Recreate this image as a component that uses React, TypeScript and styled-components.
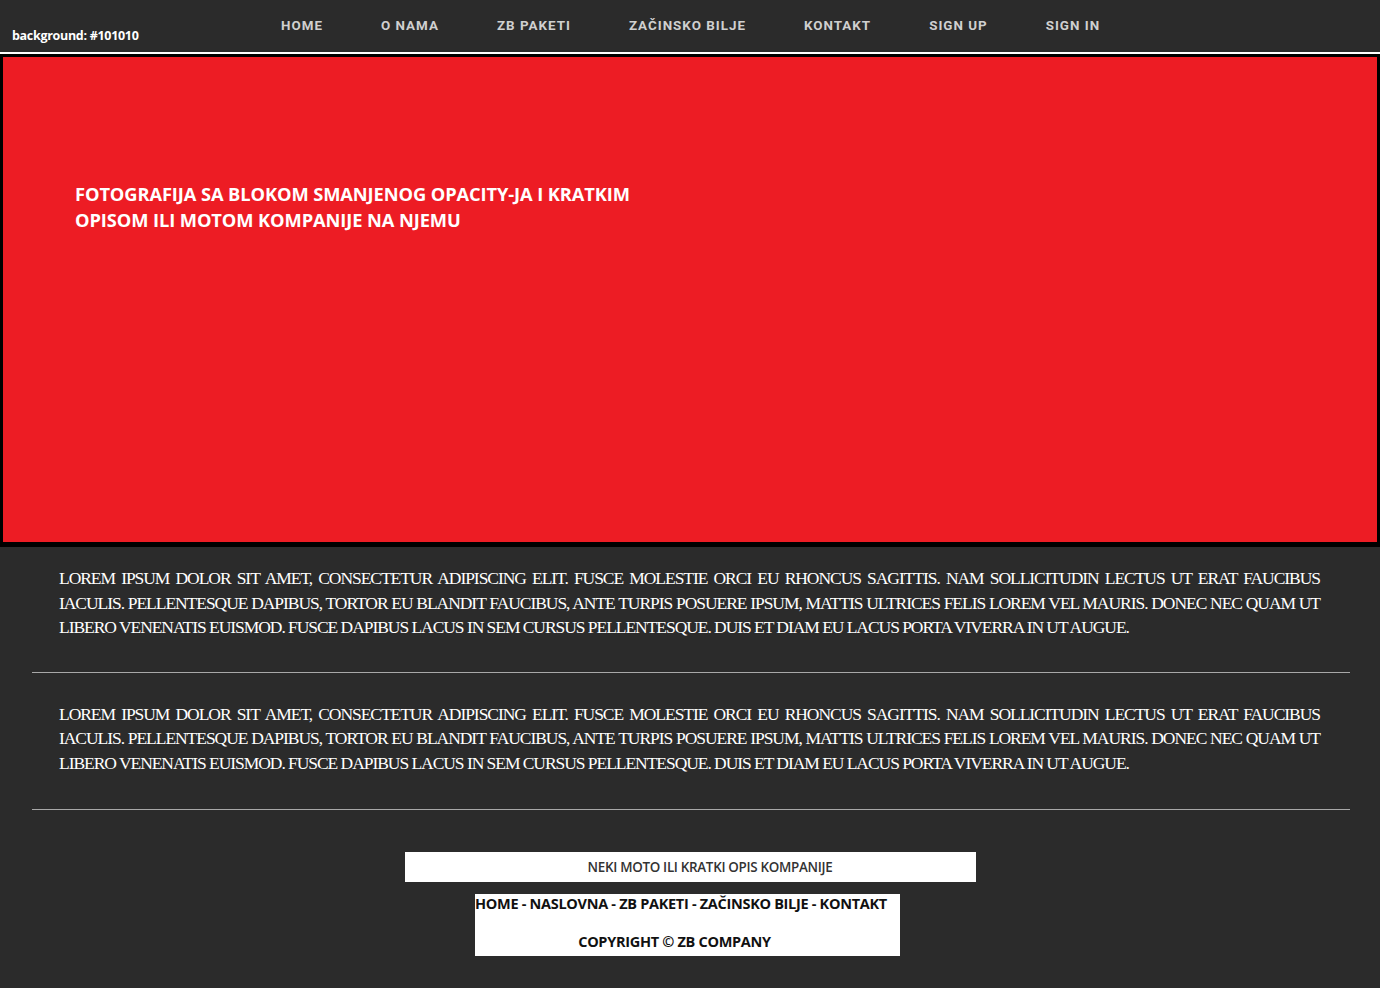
import React from "react";
import styled, { createGlobalStyle } from "styled-components";

const Global = createGlobalStyle`
  html, body { margin: 0; padding: 0; background: #2b2b2b; }
  * { box-sizing: border-box; }
`;

const Page = styled.div`
  width: 1380px;
  min-height: 988px;
  background: #2b2b2b;
  display: flex;
  flex-direction: column;
`;

const Header = styled.header`
  height: 52px;
  display: flex;
  background: #2b2b2b;
  border-bottom: 2px solid #ffffff;
  box-sizing: content-box;
`;

const Label = styled.div`
  width: 281px;
  padding-left: 12px;
  align-self: flex-end;
  padding-bottom: 8px;
  font-family: "Open Sans", "Noto Sans", sans-serif;
  font-weight: 700;
  font-size: 12.5px;
  color: #ffffff;
  letter-spacing: -0.3px;
`;

const Nav = styled.nav`
  display: flex;
  gap: 58px;
  padding-top: 17px;
`;

const NavLink = styled.a`
  font-family: Roboto, "Liberation Sans", sans-serif;
  font-weight: 700;
  font-size: 13.4px;
  letter-spacing: 1px;
  color: #d0d0d0;
  text-decoration: none;
  line-height: 17px;
`;

const HeroFrame = styled.section`
  background: #000000;
  padding: 3px 3px 5px 3px;
  height: 493px;
`;

const Hero = styled.div`
  background: #ed1c24;
  height: 100%;
  padding: 124px 0 0 72px;
`;

const HeroText = styled.h1`
  margin: 0;
  width: 580px;
  font-family: "Open Sans", "Noto Sans", sans-serif;
  font-weight: 700;
  font-size: 18.3px;
  line-height: 26px;
  color: #ffffff;
  letter-spacing: -0.1px;
`;

const Content = styled.main`
  padding-top: 19px;
`;

const Para = styled.p`
  margin: 0;
  padding: 0 60px 0 59px;
  font-family: "Liberation Serif", "Times New Roman", serif;
  font-size: 17.5px;
  line-height: 24.5px;
  color: #ffffff;
  text-align: justify;
  text-transform: uppercase;
  letter-spacing: -1.05px;
`;

const Rule = styled.hr<{ $top: number }>`
  margin: ${(p) => p.$top}px 30px 29px 32px;
  border: 0;
  border-top: 1px solid #a8a8a8;
  height: 0;
`;

const Footer = styled.footer`
  display: flex;
  flex-direction: column;
  align-items: center;
  gap: 12px;
  padding-top: 13px;
`;

const Motto = styled.div`
  width: 571px;
  height: 30px;
  background: #ffffff;
  display: flex;
  align-items: center;
  justify-content: center;
  padding-left: 40px;
  font-family: "Open Sans", "Noto Sans", sans-serif;
  font-weight: 600;
  font-size: 13.4px;
  color: #333333;
  letter-spacing: -0.3px;
`;

const Links = styled.div`
  width: 425px;
  height: 62px;
  margin-left: -5px;
  background: #ffffff;
  font-family: "Open Sans", "Noto Sans", sans-serif;
  font-weight: 700;
  font-size: 14.5px;
  color: #111111;
  letter-spacing: -0.3px;
  display: flex;
  flex-direction: column;
`;

const LinksRow = styled.div`
  line-height: 19px;
`;

const Copy = styled.div`
  margin-top: 19px;
  line-height: 19px;
  text-align: center;
  padding-right: 26px;
`;

const lorem =
  "Lorem ipsum dolor sit amet, consectetur adipiscing elit. Fusce molestie orci eu rhoncus sagittis. Nam sollicitudin lectus ut erat faucibus iaculis. Pellentesque dapibus, tortor eu blandit faucibus, ante turpis posuere ipsum, mattis ultrices felis lorem vel mauris. Donec nec quam ut libero venenatis euismod. Fusce dapibus lacus in sem cursus pellentesque. Duis et diam eu lacus porta viverra in ut augue.";

const navItems = ["HOME", "O NAMA", "ZB PAKETI", "ZAČINSKO BILJE", "KONTAKT", "SIGN UP", "SIGN IN"];

export default function App() {
  return (
    <>
      <Global />
      <Page>
        <Header>
          <Label>background: #101010</Label>
          <Nav>
            {navItems.map((n) => (
              <NavLink key={n} href="#">
                {n}
              </NavLink>
            ))}
          </Nav>
        </Header>
        <HeroFrame>
          <Hero>
            <HeroText>
              FOTOGRAFIJA SA BLOKOM SMANJENOG OPACITY-JA I KRATKIM OPISOM ILI MOTOM KOMPANIJE NA NJEMU
            </HeroText>
          </Hero>
        </HeroFrame>
        <Content>
          <Para>{lorem}</Para>
          <Rule $top={32} />
          <Para>{lorem}</Para>
          <Rule $top={34} />
        </Content>
        <Footer>
          <Motto>NEKI MOTO ILI KRATKI OPIS KOMPANIJE</Motto>
          <Links>
            <LinksRow>HOME - NASLOVNA - ZB PAKETI - ZAČINSKO BILJE - KONTAKT</LinksRow>
            <Copy>COPYRIGHT © ZB COMPANY</Copy>
          </Links>
        </Footer>
      </Page>
    </>
  );
}
